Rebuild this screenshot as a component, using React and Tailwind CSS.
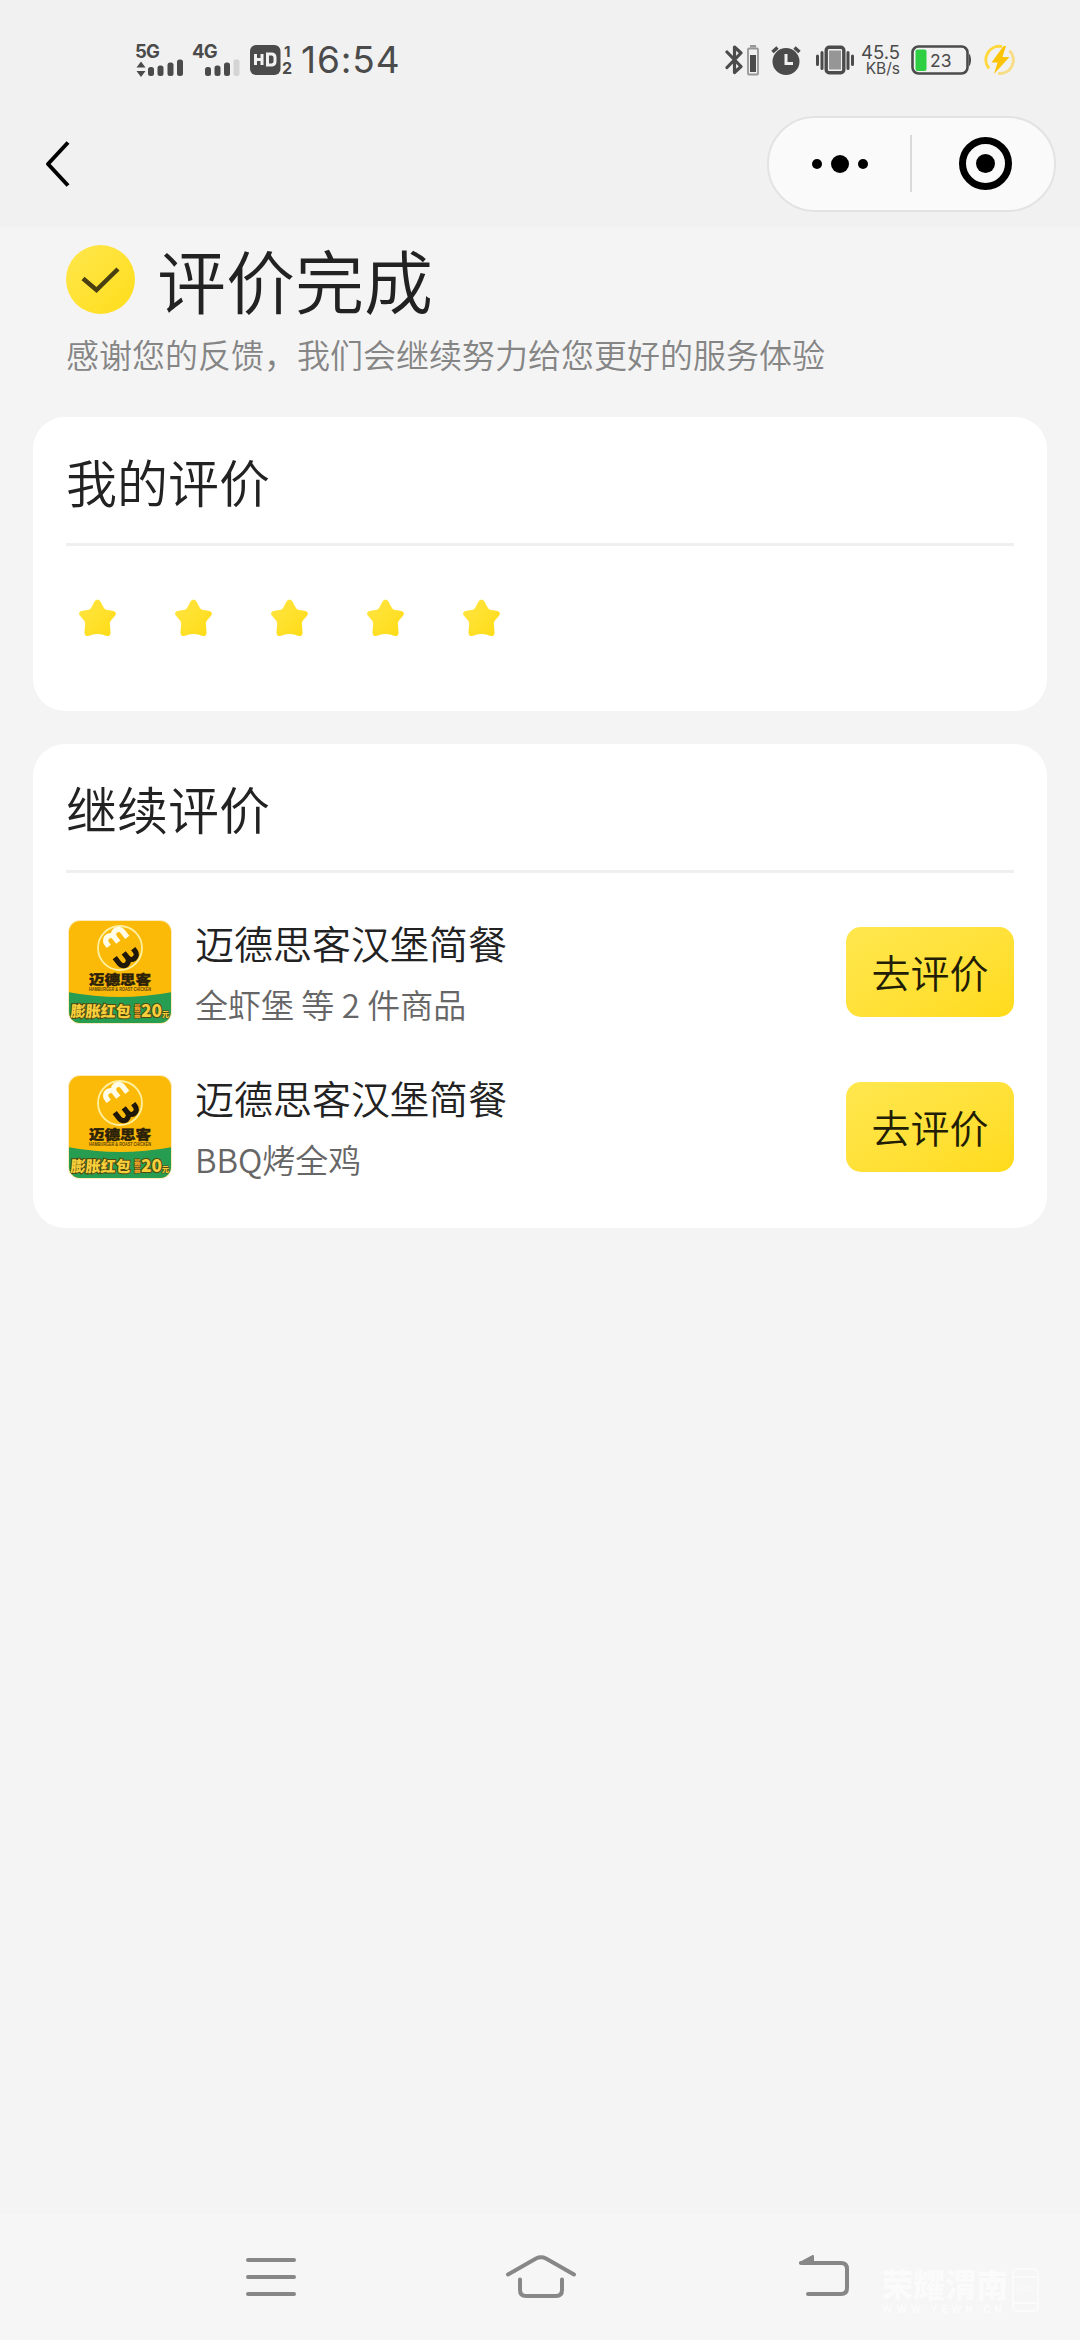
const orders = [
  { id: 1, shop: '迈德思客汉堡简餐', goods: '全虾堡 等 2 件商品' },
  { id: 2, shop: '迈德思客汉堡简餐', goods: 'BBQ烤全鸡' },
]

const STAR_PATH =
  'M17.2 2.1 Q20 -1 22.8 2.1 L26.6 9.2 Q27.4 10.6 29 11 L36.6 12.4 Q40.4 13.8 38 17.2 L33.6 22.4 Q32.6 23.8 32.7 25.4 L33.4 34.6 Q33 38.6 29.4 38 Q20 34 10.6 38 Q7 38.6 6.6 34.6 L7.3 25.4 Q7.4 23.8 6.4 22.4 L2 17.2 Q-0.4 13.8 3.4 12.4 L11 11 Q12.6 10.6 13.4 9.2 Z'

// One half of the shop's round mark, the other half is the same shape turned by 180 degrees
const MARK_PATH = 'M0 4V0a6 6 0 0 1 12 0V7M12 0a6 6 0 0 1 12 0V9'

function StatusBar() {
  return (
    <div className="flex h-[120px] items-center pl-[135px] pr-[63px] text-[#4b4b4b]">
      {/* Signal, SIM 1 */}
      <div className="flex h-[40px] w-[49px] flex-col">
        <span className="pt-[1px] font-['Inter'] text-[18.5px] font-bold leading-[20px] tracking-[-0.8px]">5G</span>
        <svg className="mt-[-2px]" width="49" height="18" viewBox="0 14 49 18" fill="currentColor">
          <path d="M6 16.500l4.500 6h-9zM6 32l4.500-6h-9z" />
          <rect x="13" y="22" width="6" height="9" rx="2.500" />
          <rect x="22.500" y="20.500" width="6" height="10.500" rx="2.500" />
          <rect x="32.500" y="17.500" width="6" height="13.500" rx="2.500" />
          <rect x="42" y="14.500" width="6" height="16.500" rx="2.500" />
        </svg>
      </div>
      {/* Signal, SIM 2 */}
      <div className="ml-[8px] flex h-[40px] w-[49px] flex-col">
        <span className="pt-[1px] font-['Inter'] text-[18.5px] font-bold leading-[20px] tracking-[-0.8px]">4G</span>
        <svg className="mt-[-2px]" width="49" height="18" viewBox="0 14 49 18" fill="currentColor">
          <rect x="13" y="22" width="6" height="9" rx="2.500" />
          <rect x="22.500" y="20.500" width="6" height="10.500" rx="2.500" />
          <rect x="32" y="17.500" width="6" height="13.500" rx="2.500" />
          <rect x="41.500" y="14.500" width="6" height="16.500" rx="2" fill="#d4d4d4" />
        </svg>
      </div>
      <svg className="ml-[9px]" width="44" height="34" viewBox="0 0 44 34" fill="currentColor">
        <rect x="0" y="2" width="30.500" height="30" rx="6" />
        <path d="M5.500 11v11M12 11v11M5.500 16.500h6.500M17.500 11v11h4.500q3-0.500 3-3.500v-4q0-3-3-3.500z" fill="none" stroke="#f1f1f1" strokeWidth="3" />
        <text x="34" y="14" fontSize="15" fontWeight="700" fontFamily="Inter">1</text>
        <text x="32" y="31" fontSize="16" fontWeight="700" fontFamily="Inter">2</text>
      </svg>
      <span className="ml-[7px] font-['Inter'] text-[37px] leading-[40px] tracking-[0.9px]">16:54</span>

      <div className="ml-auto flex items-center">
        <svg width="34" height="34" viewBox="0 0 34 34" fill="none" stroke="currentColor" strokeWidth="3.200">
          <path d="M2 9L16 23.500 9.500 29.500V4L16 10 2 24.500" strokeLinecap="round" strokeLinejoin="round" />
          <rect x="23" y="5.500" width="10" height="26" rx="1" stroke="#969696" strokeWidth="1.800" />
          <rect x="25" y="2" width="6" height="2.500" fill="#969696" stroke="none" />
          <rect x="25" y="12" width="6" height="17" fill="currentColor" stroke="none" />
        </svg>
        <svg className="ml-[12px]" width="30" height="34" viewBox="0 0 30 34">
          <circle cx="15" cy="18.500" r="13.500" fill="currentColor" />
          <path d="M1.500 9L6.500 4.500M23.500 4.500L28.500 9" stroke="currentColor" strokeWidth="3.500" />
          <path d="M15 11v9.500h7" fill="none" stroke="#f1f1f1" strokeWidth="3" />
        </svg>
        <svg className="ml-[15px]" width="38" height="34" viewBox="0 0 38 34" stroke="currentColor" fill="none">
          <rect x="10.200" y="4.200" width="17.600" height="25.600" rx="3" strokeWidth="3.400" />
          <rect x="13" y="7.500" width="12" height="19" fill="#969696" stroke="none" />
          <path d="M6 9.500v16M32 9.500v16M1.500 13v8.500M36.500 13v8.500" strokeWidth="3" strokeLinecap="round" />
        </svg>
        <div className="ml-[6px] flex w-[40px] flex-col items-end whitespace-nowrap font-['Inter']">
          <span className="text-[18.5px] leading-[17px]">45.5</span>
          <span className="text-[15.5px] leading-[15px]">KB/s</span>
        </div>
        <svg className="ml-[11px]" width="61" height="34" viewBox="0 0 61 34">
          <rect x="1.500" y="3.500" width="55" height="27" rx="6" fill="none" stroke="currentColor" strokeWidth="2.600" />
          <rect x="4.500" y="6.500" width="11" height="21.500" rx="2" fill="#2fcf43" />
          <path d="M58.500 11.500q2.200 5.500 0 11z" fill="currentColor" stroke="currentColor" />
          <text x="19" y="23.500" fontSize="17.500" fontFamily="Inter" fill="currentColor">23</text>
        </svg>
        <svg className="ml-[11px]" width="34" height="34" viewBox="0 0 34 34">
          <path d="M19 3.600A13.500 13.500 0 0 0 6 25.500" fill="none" stroke="#ffd83d" strokeWidth="3" />
          <path d="M26.500 7.500A13.500 13.500 0 0 1 15 30.400" fill="none" stroke="#f7dd86" strokeWidth="3" />
          <path d="M20.500 3L8.500 19.500h6L11 31 26.500 14h-7l3.500-11z" fill="#fbc408" />
        </svg>
      </div>
    </div>
  )
}

function TitleBar() {
  return (
    <div className="flex h-[107px] items-center justify-between pb-[20px] pl-[45px] pr-[24px]">
      <svg width="26" height="48" viewBox="0 0 26 48" fill="none" stroke="#000" strokeWidth="4">
        <path d="M23 2.500L3 24l20 21.500" strokeLinejoin="round" />
      </svg>
      <div className="flex h-[96px] w-[289px] items-center rounded-full border-2 border-[#e3e3e3] bg-[#fafafa]">
        <div className="flex w-[141px] items-center justify-center gap-[9px]">
          <span className="size-[10px] rounded-full bg-black"></span>
          <span className="size-[18px] rounded-full bg-black"></span>
          <span className="size-[10px] rounded-full bg-black"></span>
        </div>
        <div className="h-[57px] w-[2px] bg-[#dadada]"></div>
        <div className="ml-[47px] flex size-[53px] items-center justify-center rounded-full border-[7px] border-black">
          <span className="size-[19px] rounded-full bg-black"></span>
        </div>
      </div>
    </div>
  )
}

function Card({ title, children }) {
  return (
    <section className="mx-[33px] rounded-[32px] bg-white px-[33px]">
      <h2 className="flex h-[129px] items-center border-b-[3px] border-[#efefef] pt-[2px] text-[51px] font-[350] leading-[60px] text-[#222]">
        {title}
      </h2>
      {children}
    </section>
  )
}

function ShopLogo() {
  return (
    <svg className="ml-[2px] shrink-0" width="104" height="104" viewBox="0 0 104 104">
      <defs>
        <clipPath id="logo-clip">
          <rect x="1" y="1" width="102" height="102" rx="11" />
        </clipPath>
      </defs>
      <rect width="104" height="104" rx="12" fill="#fdebbd" />
      <g clipPath="url(#logo-clip)">
        <rect x="1" y="1" width="102" height="102" fill="#fcba08" />
        <path d="M0 72Q52 82 104 72V104H0z" fill="#269d51" />
        <circle cx="52" cy="28" r="22" fill="none" stroke="#fff0a0" strokeWidth="1.800" />
        <g fill="none" strokeWidth="6.300" strokeLinejoin="round" transform="translate(53 27.500) scale(0.840) translate(-52 -28)">
          <path d={MARK_PATH} stroke="#fffde8" transform="translate(35 23.500) rotate(-38)" />
          <path d={MARK_PATH} stroke="#1f1808" transform="rotate(180 52 28) translate(35 23.500) rotate(-38)" />
        </g>
        <text x="52" y="64" textAnchor="middle" fontSize="13" fontWeight="900" fill="#2b2108" stroke="#2b2108" strokeWidth="0.400" textLength="62" lengthAdjust="spacingAndGlyphs">迈德思客</text>
        <text x="52" y="70.500" textAnchor="middle" fontSize="4.500" fontWeight="700" fill="#5a4308" fontFamily="Liberation Sans" textLength="62" lengthAdjust="spacingAndGlyphs">HAMBURGER &amp; ROAST CHICKEN</text>
        <g fontWeight="900" fill="#f7cf3a" stroke="#4f4a12" strokeWidth="2" paintOrder="stroke">
          <text x="3" y="97" fontSize="15.500" textLength="60" lengthAdjust="spacingAndGlyphs" transform="skewX(-4) translate(6 0)">膨胀红包</text>
          <text x="66" y="90" fontSize="6.500" fill="#f0a52a" strokeWidth="1">最</text>
          <text x="66" y="97" fontSize="6.500" fill="#f0a52a" strokeWidth="1">高</text>
          <text x="73" y="97" fontSize="18" textLength="21" lengthAdjust="spacingAndGlyphs">20</text>
          <text x="94" y="97" fontSize="7" strokeWidth="1">元</text>
        </g>
      </g>
    </svg>
  )
}

function OrderRow({ order }) {
  return (
    <div className="flex h-[102px] items-center">
      <ShopLogo />
      <div className="ml-[23px] flex flex-1 flex-col gap-[14px] pb-[4px]">
        <p className="text-[39px] font-[350] leading-[54px] text-[#222]">{order.shop}</p>
        <p className="text-[33px] font-[350] leading-[42px] text-[#666]">{order.goods}</p>
      </div>
      <button className="h-[90px] w-[168px] rounded-[15px] bg-gradient-to-br from-[#ffe74d] to-[#ffdb19] pb-[2px] text-[39px] font-[350] text-[#221d05]">
        去评价
      </button>
    </div>
  )
}

function NavBar() {
  return (
    <nav className="relative flex h-[127px] items-center bg-[#f6f6f6] pl-[245px] text-[#878787]">
      <svg width="52" height="48" viewBox="0 0 52 48" stroke="currentColor" strokeWidth="4" strokeLinecap="round">
        <path d="M3 7h46M3 24h46M3 41h46" />
      </svg>
      <svg className="ml-[208px]" width="72" height="48" viewBox="0 0 72 48" fill="none" stroke="currentColor" strokeWidth="4" strokeLinecap="round">
        <path d="M3 21.500L31 5.500q5-2.500 10 0L69 21.500" />
        <path d="M15 26.500v10.500q0 6 6 6h30q6 0 6-6V26.500" />
      </svg>
      <svg className="ml-[220px]" width="54" height="48" viewBox="0 0 54 48" fill="none" stroke="currentColor" strokeWidth="4" strokeLinecap="round">
        <path d="M4 10h40q6 0 6 6v19q0 6-6 6H11" />
        <path d="M3 10L16 3v7z" fill="currentColor" strokeWidth="2" strokeLinejoin="round" />
      </svg>

      {/* Watermark */}
      <div className="absolute left-[882px] top-[52px] flex items-start gap-[3px] text-[#fbfbfb]">
        <div className="w-[127px] whitespace-nowrap">
          <p className="text-[31.5px] font-black leading-[36px]">荣耀渭南</p>
          <p className="mt-[1px] font-['Inter'] text-[10px] font-extrabold leading-[14px] tracking-[3.6px]">WWW.YEWN.CN</p>
        </div>
        <div className="mt-[3px] flex h-[44px] w-[27px] flex-col items-center justify-center rounded-[5px] border-2 border-[#fbfbfb]">
          <span className="w-full border-y-2 border-[#fbfbfb] py-[6px] text-center font-['Inter'] text-[9px] leading-[12px]">APP</span>
        </div>
      </div>
    </nav>
  )
}

function App() {
  return (
    <div className="flex h-[2340px] w-[1080px] flex-col overflow-hidden bg-[#f4f4f4] font-['Noto_Sans_CJK_SC',sans-serif]">
      <header className="bg-[#f1f1f1]">
        <StatusBar />
        <TitleBar />
      </header>

      <main className="flex-1">
        <div className="h-[190px] px-[66px] pt-[13px]">
          <div className="flex items-center gap-[22px]">
            <svg width="69" height="69" viewBox="0 0 69 69">
              <defs>
                <linearGradient id="done-bg" x1="0" y1="0" x2="1" y2="1">
                  <stop offset="0" stopColor="#ffe74d" />
                  <stop offset="1" stopColor="#ffdd1a" />
                </linearGradient>
              </defs>
              <circle cx="34.500" cy="34.500" r="34.500" fill="url(#done-bg)" />
              <path d="M17 33.500L30.500 45 52 24" fill="none" stroke="#4a3f10" strokeWidth="4.500" />
            </svg>
            <h1 className="text-[69px] font-[350] leading-[78px] text-[#222]">评价完成</h1>
          </div>
          <p className="mt-[15px] text-[33px] font-[350] leading-[42px] text-[#858585]">
            感谢您的反馈，我们会继续努力给您更好的服务体验
          </p>
        </div>

        <Card title="我的评价">
          <div className="flex h-[165px] gap-[57px] pl-[12px] pt-[53px]">
            {[1, 2, 3, 4, 5].map((n) => (
              <svg key={n} width="39" height="38" viewBox="0 0 40 39">
                <defs>
                  <linearGradient id="star-bg" x1="0" y1="0" x2="1" y2="1">
                    <stop offset="0.200" stopColor="#ffe33b" />
                    <stop offset="1" stopColor="#ffdc14" />
                  </linearGradient>
                </defs>
                <path d={STAR_PATH} fill="url(#star-bg)" />
              </svg>
            ))}
          </div>
        </Card>

        <div className="h-[33px]"></div>

        <Card title="继续评价">
          <div className="flex flex-col gap-[53px] pb-[50px] pt-[48px]">
            {orders.map((order) => (
              <OrderRow key={order.id} order={order} />
            ))}
          </div>
        </Card>
      </main>

      <NavBar />
    </div>
  )
}

export default App
